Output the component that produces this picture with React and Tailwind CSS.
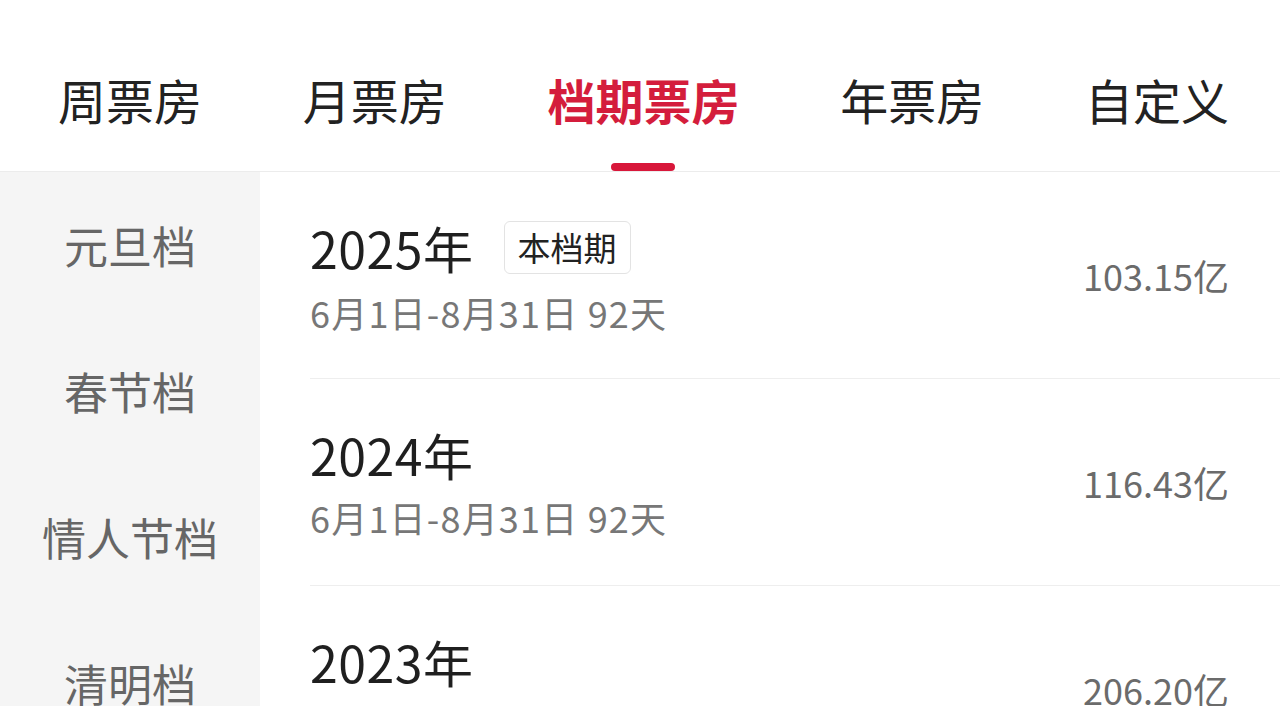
const TABS = ['周票房', '月票房', '档期票房', '年票房', '自定义']
const ACTIVE_TAB = 2

const SEASONS = ['元旦档', '春节档', '情人节档', '清明档', '五一档']

const ROWS = [
  { year: '2025年', range: '6月1日-8月31日 92天', total: '103.15亿', current: true },
  { year: '2024年', range: '6月1日-8月31日 92天', total: '116.43亿' },
  { year: '2023年', range: '6月1日-8月31日 92天', total: '206.20亿' },
]

const FONT = "font-['Noto_Sans_CJK_SC','Noto_Sans',sans-serif]"

export default function App() {
  return (
    <div className={`flex h-[706px] w-[1280px] flex-col overflow-hidden bg-white ${FONT}`}>
      <nav className="flex h-[172px] shrink-0 justify-between border-b border-[#ececec] pl-[58px] pr-[51px] pt-[75px]">
        {TABS.map((tab, i) => {
          const active = i === ACTIVE_TAB
          return (
            <div key={tab} className="flex flex-col items-center">
              <span
                className={
                  active
                    ? 'text-[48px] leading-none font-bold text-[#d41d3c]'
                    : 'text-[48px] leading-none text-[#222]'
                }
              >
                {tab}
              </span>
              <span className={active ? 'mt-[40px] h-[9px] w-[64px] rounded-full bg-[#d8173a]' : 'mt-[40px] h-[9px]'} />
            </div>
          )
        })}
      </nav>

      <div className="flex min-h-0 flex-1">
        <aside className="w-[260px] shrink-0 bg-[#f5f5f5]">
          {SEASONS.map(name => (
            <div key={name} className="flex h-[146px] items-center justify-center text-[44px] leading-none text-[#666]">
              {name}
            </div>
          ))}
        </aside>

        <main className="flex-1 pl-[50px]">
          {ROWS.map(row => (
            <div
              key={row.year}
              className="flex h-[207px] shrink-0 items-center justify-between border-b border-[#eeeeee] pr-[51px]"
            >
              <div className="flex flex-col gap-[20px]">
                <div className="flex items-center gap-[30px]">
                  <span className="text-[50px] leading-none tracking-[0.5px] text-[#1f1f1f]">{row.year}</span>
                  {row.current && (
                    <span className="rounded-md border border-[#e3e3e3] px-[13px] py-[9px] text-[33px] leading-none text-[#222]">
                      本档期
                    </span>
                  )}
                </div>
                <span className="text-[36px] leading-none tracking-[1.2px] text-[#777]">{row.range}</span>
              </div>
              <span className="text-[36px] leading-none text-[#6b6b6b]">{row.total}</span>
            </div>
          ))}
        </main>
      </div>
    </div>
  )
}
